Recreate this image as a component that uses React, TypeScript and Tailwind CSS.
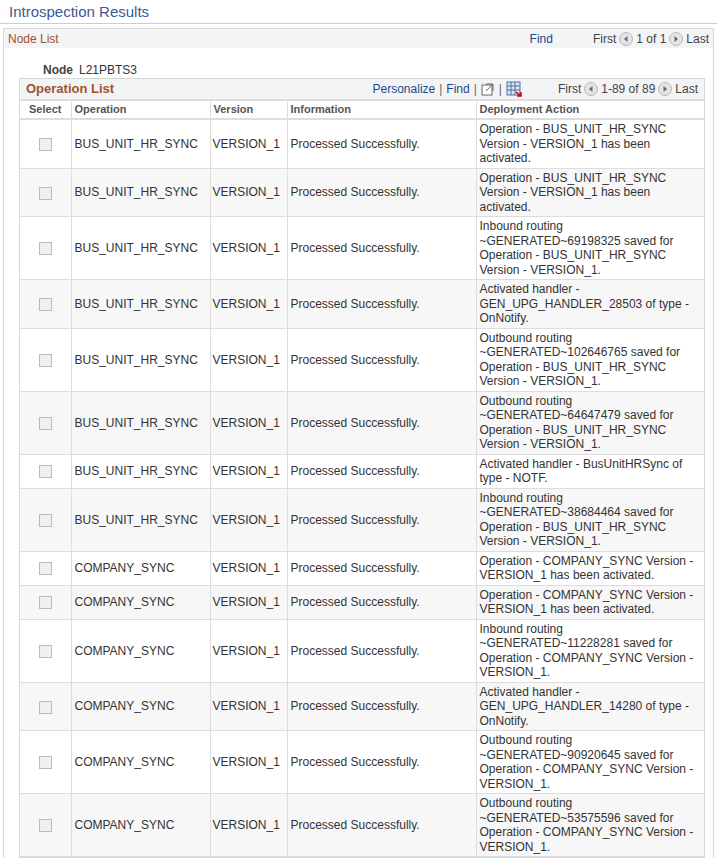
const rows: [string, string][] = [
  ["BUS_UNIT_HR_SYNC", "Operation - BUS_UNIT_HR_SYNC Version - VERSION_1 has been activated."],
  ["BUS_UNIT_HR_SYNC", "Operation - BUS_UNIT_HR_SYNC Version - VERSION_1 has been activated."],
  ["BUS_UNIT_HR_SYNC", "Inbound routing ~GENERATED~69198325 saved for Operation - BUS_UNIT_HR_SYNC Version - VERSION_1."],
  ["BUS_UNIT_HR_SYNC", "Activated handler - GEN_UPG_HANDLER_28503 of type - OnNotify."],
  ["BUS_UNIT_HR_SYNC", "Outbound routing ~GENERATED~102646765 saved for Operation - BUS_UNIT_HR_SYNC Version - VERSION_1."],
  ["BUS_UNIT_HR_SYNC", "Outbound routing ~GENERATED~64647479 saved for Operation - BUS_UNIT_HR_SYNC Version - VERSION_1."],
  ["BUS_UNIT_HR_SYNC", "Activated handler - BusUnitHRSync of type - NOTF."],
  ["BUS_UNIT_HR_SYNC", "Inbound routing ~GENERATED~38684464 saved for Operation - BUS_UNIT_HR_SYNC Version - VERSION_1."],
  ["COMPANY_SYNC", "Operation - COMPANY_SYNC Version - VERSION_1 has been activated."],
  ["COMPANY_SYNC", "Operation - COMPANY_SYNC Version - VERSION_1 has been activated."],
  ["COMPANY_SYNC", "Inbound routing ~GENERATED~11228281 saved for Operation - COMPANY_SYNC Version - VERSION_1."],
  ["COMPANY_SYNC", "Activated handler - GEN_UPG_HANDLER_14280 of type - OnNotify."],
  ["COMPANY_SYNC", "Outbound routing ~GENERATED~90920645 saved for Operation - COMPANY_SYNC Version - VERSION_1."],
  ["COMPANY_SYNC", "Outbound routing ~GENERATED~53575596 saved for Operation - COMPANY_SYNC Version - VERSION_1."],
];

function Arrow({ dir }: { dir: "l" | "r" }) {
  return (
    <svg width="14" height="14" viewBox="0 0 14 14" className="inline-block">
      <circle cx="7" cy="7" r="6.5" fill="#e4e4e4" stroke="#b8b8b8" />
      {dir === "l" ? <path d="M8.5 4 L5 7 L8.5 10 Z" fill="#666" /> : <path d="M5.5 4 L9 7 L5.5 10 Z" fill="#666" />}
    </svg>
  );
}

const narrow = { fontFamily: '"Liberation Sans Narrow", "Liberation Sans", Arial, sans-serif' };

export default function App() {
  return (
    <div className="w-[717px] h-[858px] overflow-hidden bg-white text-[12px] text-[#333]" style={{ fontFamily: '"Liberation Sans", Arial, sans-serif' }}>
      <div className="h-[22px] px-[9px] pt-[1px] text-[15px] text-[#3b5998]" style={narrow}>Introspection Results</div>
      <div className="border-t border-[#ccc] mt-[1px]" />
      <div className="ml-[3px] mr-[3px] mt-[4px] border border-[#d6d6d6] border-b-0 h-[900px]">
        <div className="h-[19px] bg-[#f3f4f5] flex items-center px-[4px] text-[12px]" style={narrow}>
          <span className="text-[#a0522d]">Node List</span>
          <span className="ml-auto text-[#1a4a8c] mr-[40px]">Find</span>
          <span className="flex items-center gap-[3px] text-[#444]">First <Arrow dir="l" /> 1 of 1 <Arrow dir="r" /> Last</span>
        </div>
        <div className="mt-[15px] ml-[39px] text-[12px] leading-[14px]" style={narrow}>
          <b className="text-[#444]">Node</b>
          <span className="ml-[6px]">L21PBTS3</span>
        </div>
        <div className="ml-[15px] mr-[8px] mt-[1px] border border-[#d6d6d6]">
          <div className="h-[20px] bg-[#f3f4f5] flex items-center px-[6px]" style={narrow}>
            <span className="text-[#a0522d] font-bold text-[13px]">Operation List</span>
            <span className="ml-auto flex items-center gap-[4px] text-[12px] text-[#1a4a8c]">
              Personalize <span className="text-[#666]">|</span> Find <span className="text-[#666]">|</span>
              <svg width="14" height="14" viewBox="0 0 14 14"><rect x="1" y="3" width="10" height="10" fill="white" stroke="#666" /><path d="M5 2h7v7" fill="none" stroke="#666" /><path d="M5 9l6-6" stroke="#666" /></svg>
              <span className="text-[#666]">|</span>
              <svg width="16" height="16" viewBox="0 0 16 16"><rect x="1" y="1" width="13" height="13" fill="#dde6f2" stroke="#4a6fa5" /><path d="M1 5h13M1 9h13M5 1v13M9 1v13" stroke="#4a6fa5" /><path d="M10 11l5 4M15 11v4h-4" stroke="#c00" strokeWidth="1.5" fill="none" /></svg>
            </span>
            <span className="ml-[36px] flex items-center gap-[3px] text-[12px] text-[#444]">First <Arrow dir="l" /> 1-89 of 89 <Arrow dir="r" /> Last</span>
          </div>
          <table className="w-full border-collapse table-fixed">
            <colgroup>
              <col className="w-[51px]" /><col className="w-[139px]" /><col className="w-[77px]" /><col className="w-[189px]" /><col />
            </colgroup>
            <thead>
              <tr className="h-[19px] text-left text-[11px] text-[#555] border-t-[2px] border-b-[2px] border-[#ddd]" style={narrow}>
                {["Select", "Operation", "Version", "Information", "Deployment Action"].map((h, i) => (
                  <th key={h} className={`font-bold px-[3px] border-l border-[#ddd] first:border-l-0 ${i === 0 ? "text-center" : ""}`}>{h}</th>
                ))}
              </tr>
            </thead>
            <tbody>
              {rows.map(([op, act], i) => (
                <tr key={i} className={`${i % 2 ? "bg-[#f7f7f7]" : "bg-white"} border-b border-[#ddd]`}>
                  <td className="text-center align-middle">
                    <span className="inline-block w-[13px] h-[13px] border border-[#bbb] bg-[#f0f0f0] align-middle" />
                  </td>
                  <td className="px-[3px] border-l border-[#ddd] whitespace-nowrap">{op}</td>
                  <td className="px-[2px] border-l border-[#ddd]">VERSION_1</td>
                  <td className="px-[3px] border-l border-[#ddd]">Processed Successfully.</td>
                  <td className="px-[3px] py-[2px] leading-[14.5px] border-l border-[#ddd]">{act}</td>
                </tr>
              ))}
            </tbody>
          </table>
        </div>
      </div>
    </div>
  );
}
